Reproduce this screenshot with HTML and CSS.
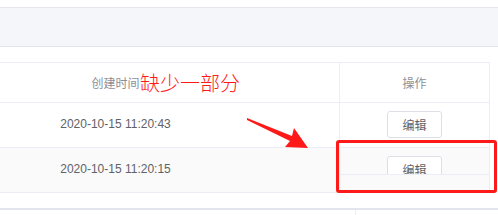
FILE: index.html
```html
<!DOCTYPE html>
<html lang="zh-CN">
<head>
    <meta charset="UTF-8">
    <title>表格</title>
    <link rel="stylesheet" href="styles.css">
</head>
<body>
    <div class="page">
        <div class="toolbar"></div>

        <div class="table">
            <div class="row head">
                <div class="cell time">创建时间</div>
                <div class="cell blank"></div>
                <div class="cell op">操作</div>
            </div>
            <div class="row">
                <div class="cell time">2020-10-15 11:20:43</div>
                <div class="cell blank"></div>
                <div class="cell op"><button class="btn">编辑</button></div>
            </div>
            <div class="row striped">
                <div class="cell time">2020-10-15 11:20:15</div>
                <div class="cell blank"></div>
                <div class="cell op cut">
                    <div class="fixed-part"><button class="btn">编辑</button></div>
                </div>
            </div>
        </div>

        <div class="next-table">
            <div class="next-left"></div>
            <div class="next-right"></div>
        </div>

        <!-- annotations drawn on top of the screenshot -->
        <div class="note">缺少一部分</div>
        <svg class="arrow" width="70" height="40" viewBox="0 0 70 40">
            <polygon points="0,2 45,20 47,12 61,32 38,31 43,25 0,4" fill="#ff1a1a"/>
        </svg>
        <div class="mark"></div>
    </div>
</body>
</html>
```

FILE: styles.css
```css
body {
    margin: 0;
    font-family: "Liberation Sans", "Noto Sans CJK SC", sans-serif;
    font-size: 12px;
    color: #606266;
    background: #fff;
}
.page {
    position: relative;
    width: 498px;
    height: 215px;
    overflow: hidden;
    padding-top: 7px;
    box-sizing: border-box;
}
.toolbar {
    height: 38px;
    background: #f5f6fa;
    border-top: 1px solid #e4e6eb;
    border-bottom: 1px solid #e4e6eb;
}
.table {
    margin-top: 15px;
    width: 490px;
    border-top: 1px solid #ebeef5;
    border-right: 1px solid #ebeef5;
    box-sizing: border-box;
}
.row {
    display: flex;
    height: 45px;
    border-bottom: 1px solid #ebeef5;
    box-sizing: border-box;
}
.row.head {
    height: 40px;
    color: #8c8f96;
}
.row.striped {
    background: #fafafa;
}
.cell {
    display: flex;
    align-items: center;
    justify-content: center;
}
.time {
    width: 231px;
    padding-bottom: 2px;
}
.blank {
    width: 108px;
}
.op {
    flex: 1;
    border-left: 1px solid #ebeef5;
}
.head .time,
.head .op {
    padding-bottom: 0;
}
.op.cut {
    align-items: flex-start;
}
.fixed-part {
    width: 100%;
    height: 27px;
    overflow: hidden;
    border-bottom: 1px solid #ebeef5;
    text-align: center;
    box-sizing: border-box;
}
.btn {
    width: 55px;
    height: 27px;
    margin-top: -1px;
    padding: 0;
    border: 1px solid #dcdfe6;
    border-radius: 3px;
    background: #fff;
    color: #606266;
    font-family: inherit;
    font-size: 12px;
}
.fixed-part .btn {
    margin-top: 8px;
}
.next-table {
    display: flex;
    margin-top: 15px;
    height: 20px;
    border-top: 2px solid #e2e5eb;
}
.next-left {
    width: 355px;
    border-right: 1px solid #ebeef5;
}
.note {
    position: absolute;
    left: 140px;
    top: 70px;
    font-family: "Noto Sans CJK SC", sans-serif;
    font-size: 20px;
    font-weight: 300;
    line-height: 26px;
    color: #ff1a1a;
}
.arrow {
    position: absolute;
    left: 247px;
    top: 116px;
}
.mark {
    position: absolute;
    left: 336px;
    top: 140px;
    width: 161px;
    height: 53px;
    border: 3px solid #ff1a1a;
    border-radius: 3px;
    box-sizing: border-box;
}
```
